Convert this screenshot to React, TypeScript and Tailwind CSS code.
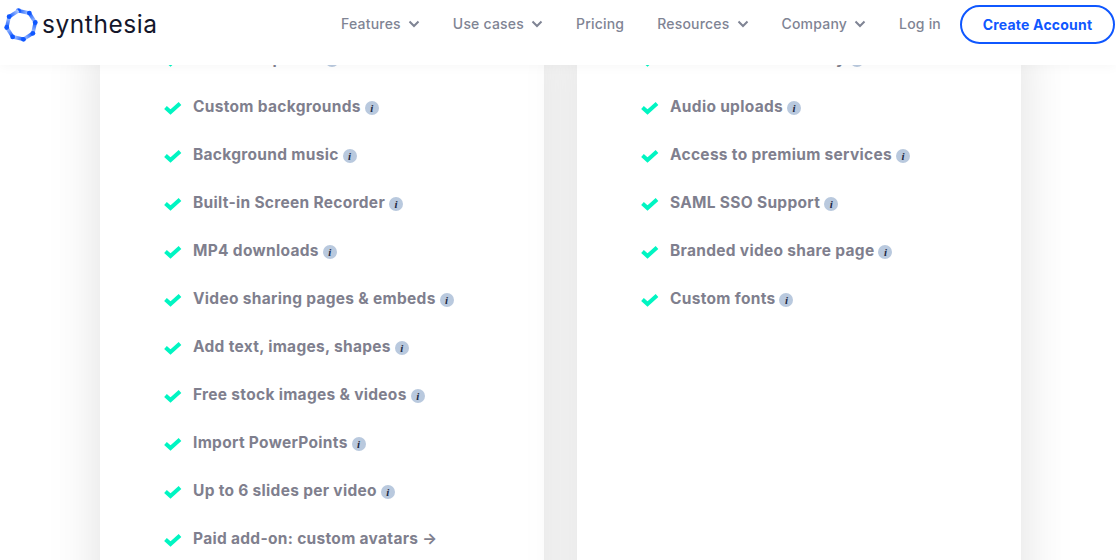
import { Fragment } from 'react';

const leftItems = [
  'Video templates',
  'Custom backgrounds',
  'Background music',
  'Built-in Screen Recorder',
  'MP4 downloads',
  'Video sharing pages & embeds',
  'Add text, images, shapes',
  'Free stock images & videos',
  'Import PowerPoints',
  'Up to 6 slides per video',
];

const rightItems = [
  'Custom Brand Identity',
  'Audio uploads',
  'Access to premium services',
  'SAML SSO Support',
  'Branded video share page',
  'Custom fonts',
];

const navItems = [
  { label: 'Features', menu: true },
  { label: 'Use cases', menu: true },
  { label: 'Pricing', menu: false },
  { label: 'Resources', menu: true },
  { label: 'Company', menu: true },
  { label: 'Log in', menu: false },
];

const Logo = () => {
  const points = Array.from({ length: 8 }, (_, i) => {
    const a = ((i * 45 - 100) * Math.PI) / 180;
    return [17 + 14.5 * Math.cos(a), 17 + 14.5 * Math.sin(a)];
  });
  return (
    <svg width="34" height="34" viewBox="0 0 34 34" fill="none">
      <defs>
        {points.map((p, i) => {
          const q = points[(i + 1) % 8];
          return (
            <linearGradient key={i} id={`seg${i}`} gradientUnits="userSpaceOnUse" x1={p[0]} y1={p[1]} x2={q[0]} y2={q[1]}>
              <stop offset="0" stopColor="#0f57ff" />
              <stop offset="1" stopColor="#b8cfff" />
            </linearGradient>
          );
        })}
      </defs>
      {points.map((p, i) => {
        const q = points[(i + 1) % 8];
        return (
          <Fragment key={i}>
            <line x1={p[0]} y1={p[1]} x2={q[0]} y2={q[1]} stroke={`url(#seg${i})`} strokeWidth="3.6" />
            <circle cx={p[0]} cy={p[1]} r="2.4" fill="#0f57ff" />
          </Fragment>
        );
      })}
    </svg>
  );
};

const Chevron = () => (
  <svg width="12" height="8" viewBox="0 0 12 8" fill="none" className="ml-[7px] mt-px">
    <path d="M1.5 1.5 6 6l4.5-4.5" stroke="#7f8494" strokeWidth="2" />
  </svg>
);

const Check = () => (
  <svg width="18" height="14" viewBox="0 0 18 14" fill="none" className="mt-[2px] shrink-0">
    <path d="M1.5 6.5 6.5 11 16 2.5" stroke="#00f5c2" strokeWidth="4" />
  </svg>
);

const Info = () => (
  <span className="mt-[2px] ml-[4px] flex h-[14px] w-[14px] items-center justify-center rounded-full bg-[#b9c9de] font-['Liberation_Serif',serif] text-[11px] leading-none font-bold text-[#1f2a44] italic">
    i
  </span>
);

const labelClass = "ml-[11px] font-['Inter',sans-serif] text-[15.5px] font-bold tracking-[0.3px] text-[#7f7f8e]";

const Row = ({ label }: { label: string }) => (
  <li className="flex h-12 items-center">
    <Check />
    <span className={labelClass}>{label}</span>
    <Info />
  </li>
);

export default function App() {
  return (
    <div className="h-[560px] w-[1116px] overflow-hidden bg-white">
      <header className="relative z-10 flex h-[65px] items-center justify-between bg-white pr-px pb-[17px] pl-[4px] shadow-[0_1px_12px_rgba(0,0,0,0.04)]">
        <div className="mt-px flex items-center gap-[4px]">
          <Logo />
          <span className="font-['Inter',sans-serif] text-[24.5px] leading-none font-normal tracking-[0.55px] text-[#14162a]">
            synthesia
          </span>
        </div>
        <nav className="flex items-center font-['Inter',sans-serif] text-[14px] font-medium tracking-[0.2px] text-[#7f8494]">
          <div className="flex items-center gap-[33px] pb-[2px]">
            {navItems.map((item) => (
              <a key={item.label} className="flex items-center">
                {item.label}
                {item.menu && <Chevron />}
              </a>
            ))}
          </div>
          <a className="ml-[19px] flex h-[39px] w-[155px] items-center justify-center rounded-full border-2 border-[#0f57ff] text-[14px] font-bold text-[#0f57ff]">
            Create Account
          </a>
        </nav>
      </header>

      <main className="-mt-[30px] flex gap-[33px] pl-[100px]">
        <ul className="h-[600px] w-[444px] bg-white pl-[64px] shadow-[0_0_50px_rgba(0,0,0,0.13)]">
          {leftItems.map((label) => (
            <Row key={label} label={label} />
          ))}
          <li className="flex h-12 items-center">
            <Check />
            <span className={labelClass}>Paid add-on: custom avatars →</span>
          </li>
        </ul>
        <ul className="h-[600px] w-[444px] bg-white pl-[64px] shadow-[0_0_50px_rgba(0,0,0,0.13)]">
          {rightItems.map((label) => (
            <Row key={label} label={label} />
          ))}
        </ul>
      </main>
    </div>
  );
}
